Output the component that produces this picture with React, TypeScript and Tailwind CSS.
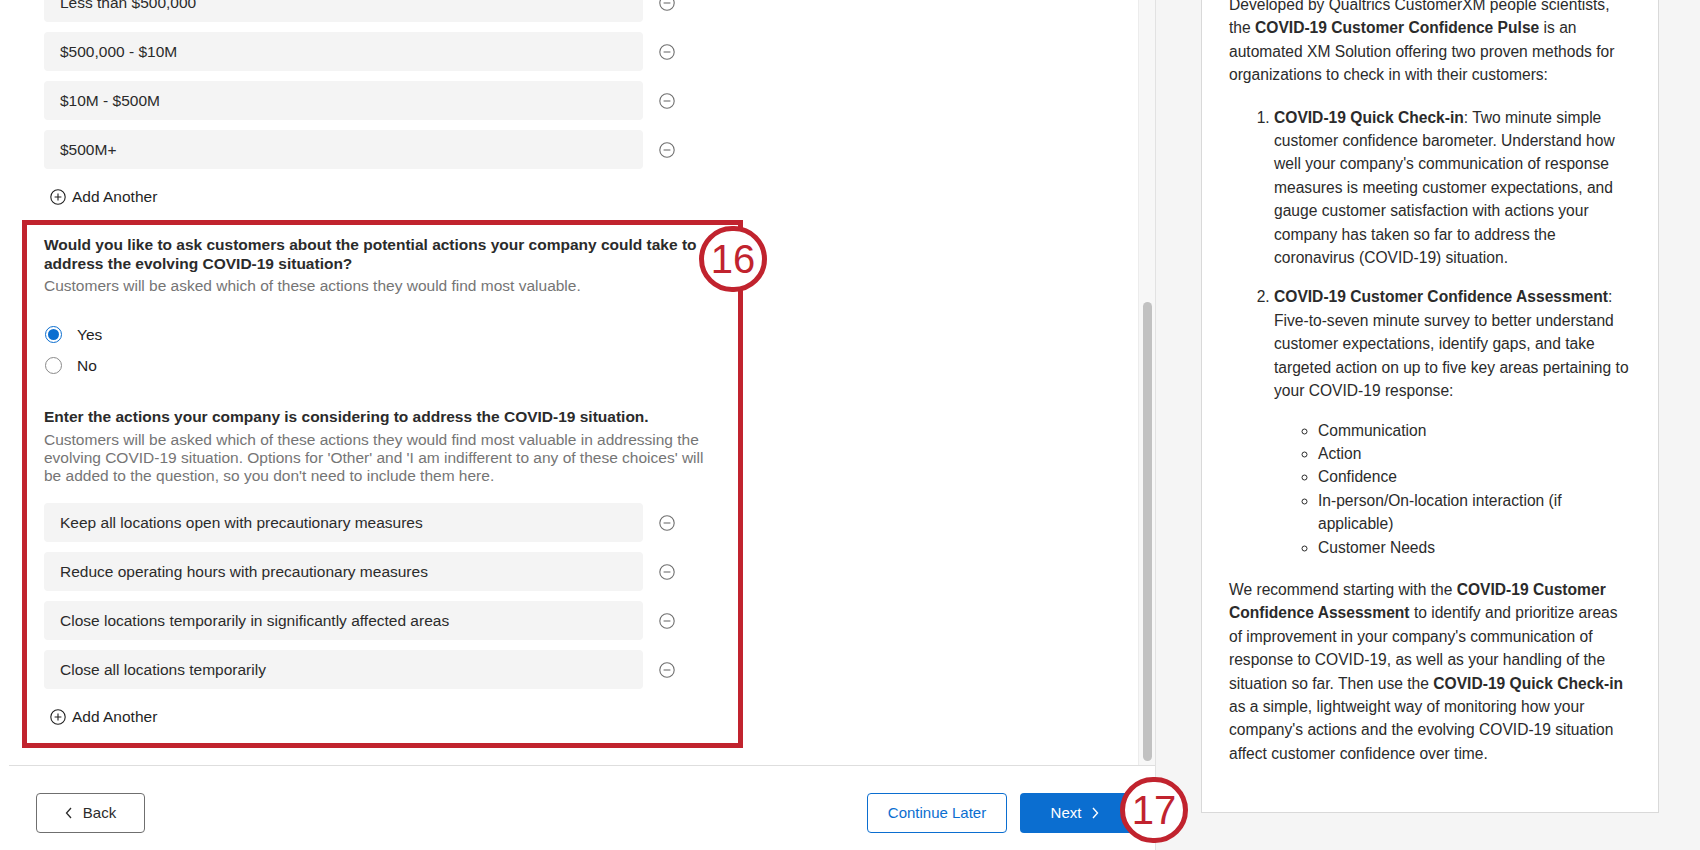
import React from 'react';

const revenueOptions = ['Less than $500,000', '$500,000 - $10M', '$10M - $500M', '$500M+'];

const actionOptions = [
  'Keep all locations open with precautionary measures',
  'Reduce operating hours with precautionary measures',
  'Close locations temporarily in significantly affected areas',
  'Close all locations temporarily',
];

const MinusCircle = () => (
  <svg width="16" height="16" viewBox="0 0 16 16" fill="none" className="shrink-0">
    <circle cx="8" cy="8" r="7.2" stroke="#6f6f6f" strokeWidth="1.1" />
    <path d="M4.6 8h6.8" stroke="#6f6f6f" strokeWidth="1.1" />
  </svg>
);

const PlusCircle = () => (
  <svg width="16" height="16" viewBox="0 0 16 16" fill="none" className="shrink-0">
    <circle cx="8" cy="8" r="7.2" stroke="#1f1f1f" strokeWidth="1.1" />
    <path d="M4.6 8h6.8M8 4.6v6.8" stroke="#1f1f1f" strokeWidth="1.1" />
  </svg>
);

const OptionRow = ({ label }: { label: string }) => (
  <div className="flex items-center gap-[16px]">
    <div className="flex h-[39px] w-[599px] items-center rounded-[4px] bg-[#f4f4f4] px-[16px] text-[15.5px] text-[#2b2b2b]">
      {label}
    </div>
    <MinusCircle />
  </div>
);

const AddAnother = () => (
  <div className="flex h-[20px] items-center gap-[6px] pl-[6px] text-[15.5px] text-[#1f1f1f]">
    <PlusCircle />
    <span>Add Another</span>
  </div>
);

const Radio = ({ label, checked }: { label: string; checked?: boolean }) => (
  <div className="flex h-[22px] items-center gap-[15px] pl-[1px] text-[15.5px] text-[#1f1f1f]">
    {checked ? (
      <span className="flex h-[17px] w-[17px] items-center justify-center rounded-full border border-[#0b6ed0] bg-white">
        <span className="h-[11px] w-[11px] rounded-full bg-[#0b6ed0]" />
      </span>
    ) : (
      <span className="h-[17px] w-[17px] rounded-full border border-[#8a8a8a] bg-white" />
    )}
    <span>{label}</span>
  </div>
);

const Marker = ({ n, className }: { n: string; className: string }) => (
  <div
    className={`absolute flex h-[66px] w-[68px] items-center justify-center rounded-full border-[5px] border-[#c1232e] bg-white text-[40px] leading-none text-[#c1232e] ${className}`}
  >
    {n}
  </div>
);

export default function App() {
  return (
    <div className="flex h-[850px] w-[1700px] overflow-hidden bg-white font-['Liberation_Sans',Arial,sans-serif]">
      {/* left: wizard step */}
      <div className="flex w-[1156px] shrink-0 flex-col border-r border-[#e2e2e2]">
        <div className="flex h-[765px] overflow-hidden">
          <div className="flex-1 overflow-hidden">
            <div className="-mt-[17px] flex flex-col gap-[10px] pl-[44px]">
              {revenueOptions.map((o) => (
                <OptionRow key={o} label={o} />
              ))}
            </div>
            <div className="mt-[18px] pl-[44px]">
              <AddAnother />
            </div>

            <div className="relative ml-[22px] mt-[13px] w-[721px] border-[5px] border-[#c1232e] pb-[16px] pl-[17px] pr-[16px] pt-[11px]">
              <p className="text-[15.5px] font-bold leading-[18.5px] text-[#2b2b2b]">
                Would you like to ask customers about the potential actions your company could take to address the
                evolving COVID-19 situation?
              </p>
              <p className="mt-[4px] text-[15.5px] leading-[18.5px] text-[#757575]">
                Customers will be asked which of these actions they would find most valuable.
              </p>
              <div className="mt-[28px] flex flex-col gap-[9px]">
                <Radio label="Yes" checked />
                <Radio label="No" />
              </div>
              <p className="mt-[31px] text-[15.5px] font-bold leading-[18.5px] text-[#2b2b2b]">
                Enter the actions your company is considering to address the COVID-19 situation.
              </p>
              <p className="mt-[5px] text-[15.5px] leading-[18px] text-[#757575]">
                Customers will be asked which of these actions they would find most valuable in addressing the
                evolving COVID-19 situation. Options for 'Other' and 'I am indifferent to any of these choices' will
                be added to the question, so you don't need to include them here.
              </p>
              <div className="mt-[18px] flex flex-col gap-[10px]">
                {actionOptions.map((o) => (
                  <OptionRow key={o} label={o} />
                ))}
              </div>
              <div className="mt-[18px]">
                <AddAnother />
              </div>
              <Marker n="16" className="-right-[29px] top-[1px]" />
            </div>
          </div>

          {/* scrollbar */}
          <div className="flex w-[17px] shrink-0 justify-center border-l border-[#ececec] bg-[#f7f7f7] pt-[302px]">
            <div className="h-[459px] w-[9px] rounded-full bg-[#c1c1c1]" />
          </div>
        </div>

        <div className="ml-[9px] border-t border-[#dedede]" />

        <div className="flex items-center justify-between pl-[36px] pr-[21px] pt-[27px]">
          <button className="flex h-[40px] w-[109px] items-center justify-center gap-[10px] rounded-[4px] border border-[#6f6f6f] text-[15px] text-[#2b2b2b]">
            <svg width="8" height="12" viewBox="0 0 8 12" fill="none">
              <path d="M6 1 1.5 6 6 11" stroke="#2b2b2b" strokeWidth="1.3" />
            </svg>
            Back
          </button>
          <div className="flex gap-[13px]">
            <button className="h-[40px] w-[140px] rounded-[4px] border border-[#0b6ed0] bg-white text-[15px] text-[#0b6ed0]">
              Continue Later
            </button>
            <div className="relative">
              <button className="flex h-[40px] w-[114px] items-center justify-center gap-[10px] rounded-[4px] bg-[#0b6ed0] pr-[4px] text-[15px] text-white">
                Next
                <svg width="8" height="12" viewBox="0 0 8 12" fill="none">
                  <path d="M2 1 6.5 6 2 11" stroke="#ffffff" strokeWidth="1.4" />
                </svg>
              </button>
              <Marker n="17" className="-right-[54px] -top-[16px]" />
            </div>
          </div>
        </div>
      </div>

      {/* right: description */}
      <div className="flex-1 bg-[#f5f5f5] pl-[45px] pr-[41px]">
        <div className="h-[813px] overflow-hidden border border-t-0 border-[#d9d9d9] bg-white pl-[27px] pr-[28px] text-[15.6px] leading-[23.4px] text-[#2b2b2b]">
          <p className="-mt-[7px] pr-[12px]">
            Developed by Qualtrics CustomerXM people scientists, the <b>COVID-19 Customer Confidence Pulse</b> is an
            automated XM Solution offering two proven methods for organizations to check in with their customers:
          </p>
          <ol className="mt-[19px] list-decimal pl-[45px]">
            <li>
              <b>COVID-19 Quick Check-in</b>: Two minute simple customer confidence barometer. Understand how well
              your company's communication of response measures is meeting customer expectations, and gauge customer
              satisfaction with actions your company has taken so far to address the coronavirus (COVID-19)
              situation.
            </li>
            <li className="mt-[16px]">
              <b>COVID-19 Customer Confidence Assessment</b>: Five-to-seven minute survey to better understand
              customer expectations, identify gaps, and take targeted action on up to five key areas pertaining to
              your COVID-19 response:
              <ul className="mt-[16px] list-[circle] pl-[44px]">
                <li>Communication</li>
                <li>Action</li>
                <li>Confidence</li>
                <li>In-person/On-location interaction (if applicable)</li>
                <li>Customer Needs</li>
              </ul>
            </li>
          </ol>
          <p className="mt-[19px]">
            We recommend starting with the <b>COVID-19 Customer Confidence Assessment</b> to identify and prioritize
            areas of improvement in your company's communication of response to COVID-19, as well as your handling
            of the situation so far. Then use the <b>COVID-19 Quick Check-in</b> as a simple, lightweight way of
            monitoring how your company's actions and the evolving COVID-19 situation affect customer confidence
            over time.
          </p>
        </div>
      </div>
    </div>
  );
}
